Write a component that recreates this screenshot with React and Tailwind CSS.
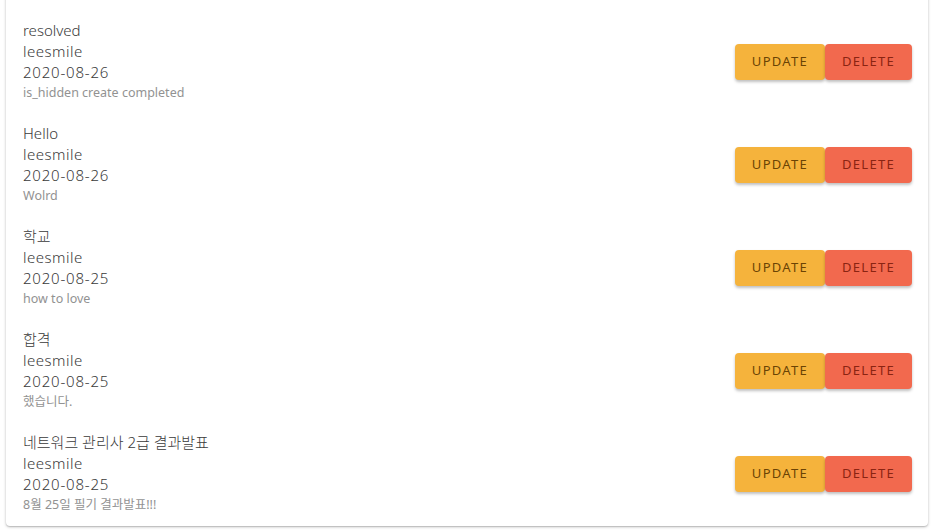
const items = [
  { title: "resolved", author: "leesmile", date: "2020-08-26", desc: "is_hidden create completed" },
  { title: "Hello", author: "leesmile", date: "2020-08-26", desc: "Wolrd" },
  { title: "학교", author: "leesmile", date: "2020-08-25", desc: "how to love" },
  { title: "합격", author: "leesmile", date: "2020-08-25", desc: "했습니다." },
  { title: "네트워크 관리사 2급 결과발표", author: "leesmile", date: "2020-08-25", desc: "8월 25일 필기 결과발표!!!" },
];

export default function App() {
  return (
    <div
      className="w-[934px] h-[532px] overflow-hidden bg-white"
      style={{ fontFamily: '"Noto Sans", "Noto Sans CJK KR", sans-serif' }}
    >
      <div className="mx-[6px] mt-[-10px] h-[536px] rounded-[4px] bg-white shadow-[0_1px_3px_rgba(0,0,0,0.25),0_1px_1px_rgba(0,0,0,0.1)] pt-[30px]">
        {items.map((it, i) => (
          <div key={i} className="flex h-[103px] items-start justify-between pl-[17px] pr-[16px]">
            <div className="flex flex-col font-light">
              <div className="text-[15px] leading-[21px] text-[#3a3a3a]">{it.title}</div>
              <div className="text-[15px] leading-[21px] tracking-[0.5px] text-[#3a3a3a]">{it.author}</div>
              <div className="text-[15px] leading-[21px] tracking-[0.8px] text-[#3a3a3a]">{it.date}</div>
              <div className="text-[12.5px] font-normal leading-[19px] text-[#929292]">{it.desc}</div>
            </div>
            <div className="mt-[24px] flex">
              <button className="h-[36px] w-[90px] rounded-[4px] bg-[#f5b33c] text-[13px] tracking-[1.3px] text-[#6b4304] shadow-[0_2px_3px_rgba(0,0,0,0.25)]">
                UPDATE
              </button>
              <button className="h-[36px] w-[87px] rounded-[4px] bg-[#f2694e] text-[13px] tracking-[1.3px] text-[#8a2412] shadow-[0_2px_3px_rgba(0,0,0,0.25)]">
                DELETE
              </button>
            </div>
          </div>
        ))}
      </div>
    </div>
  );
}
